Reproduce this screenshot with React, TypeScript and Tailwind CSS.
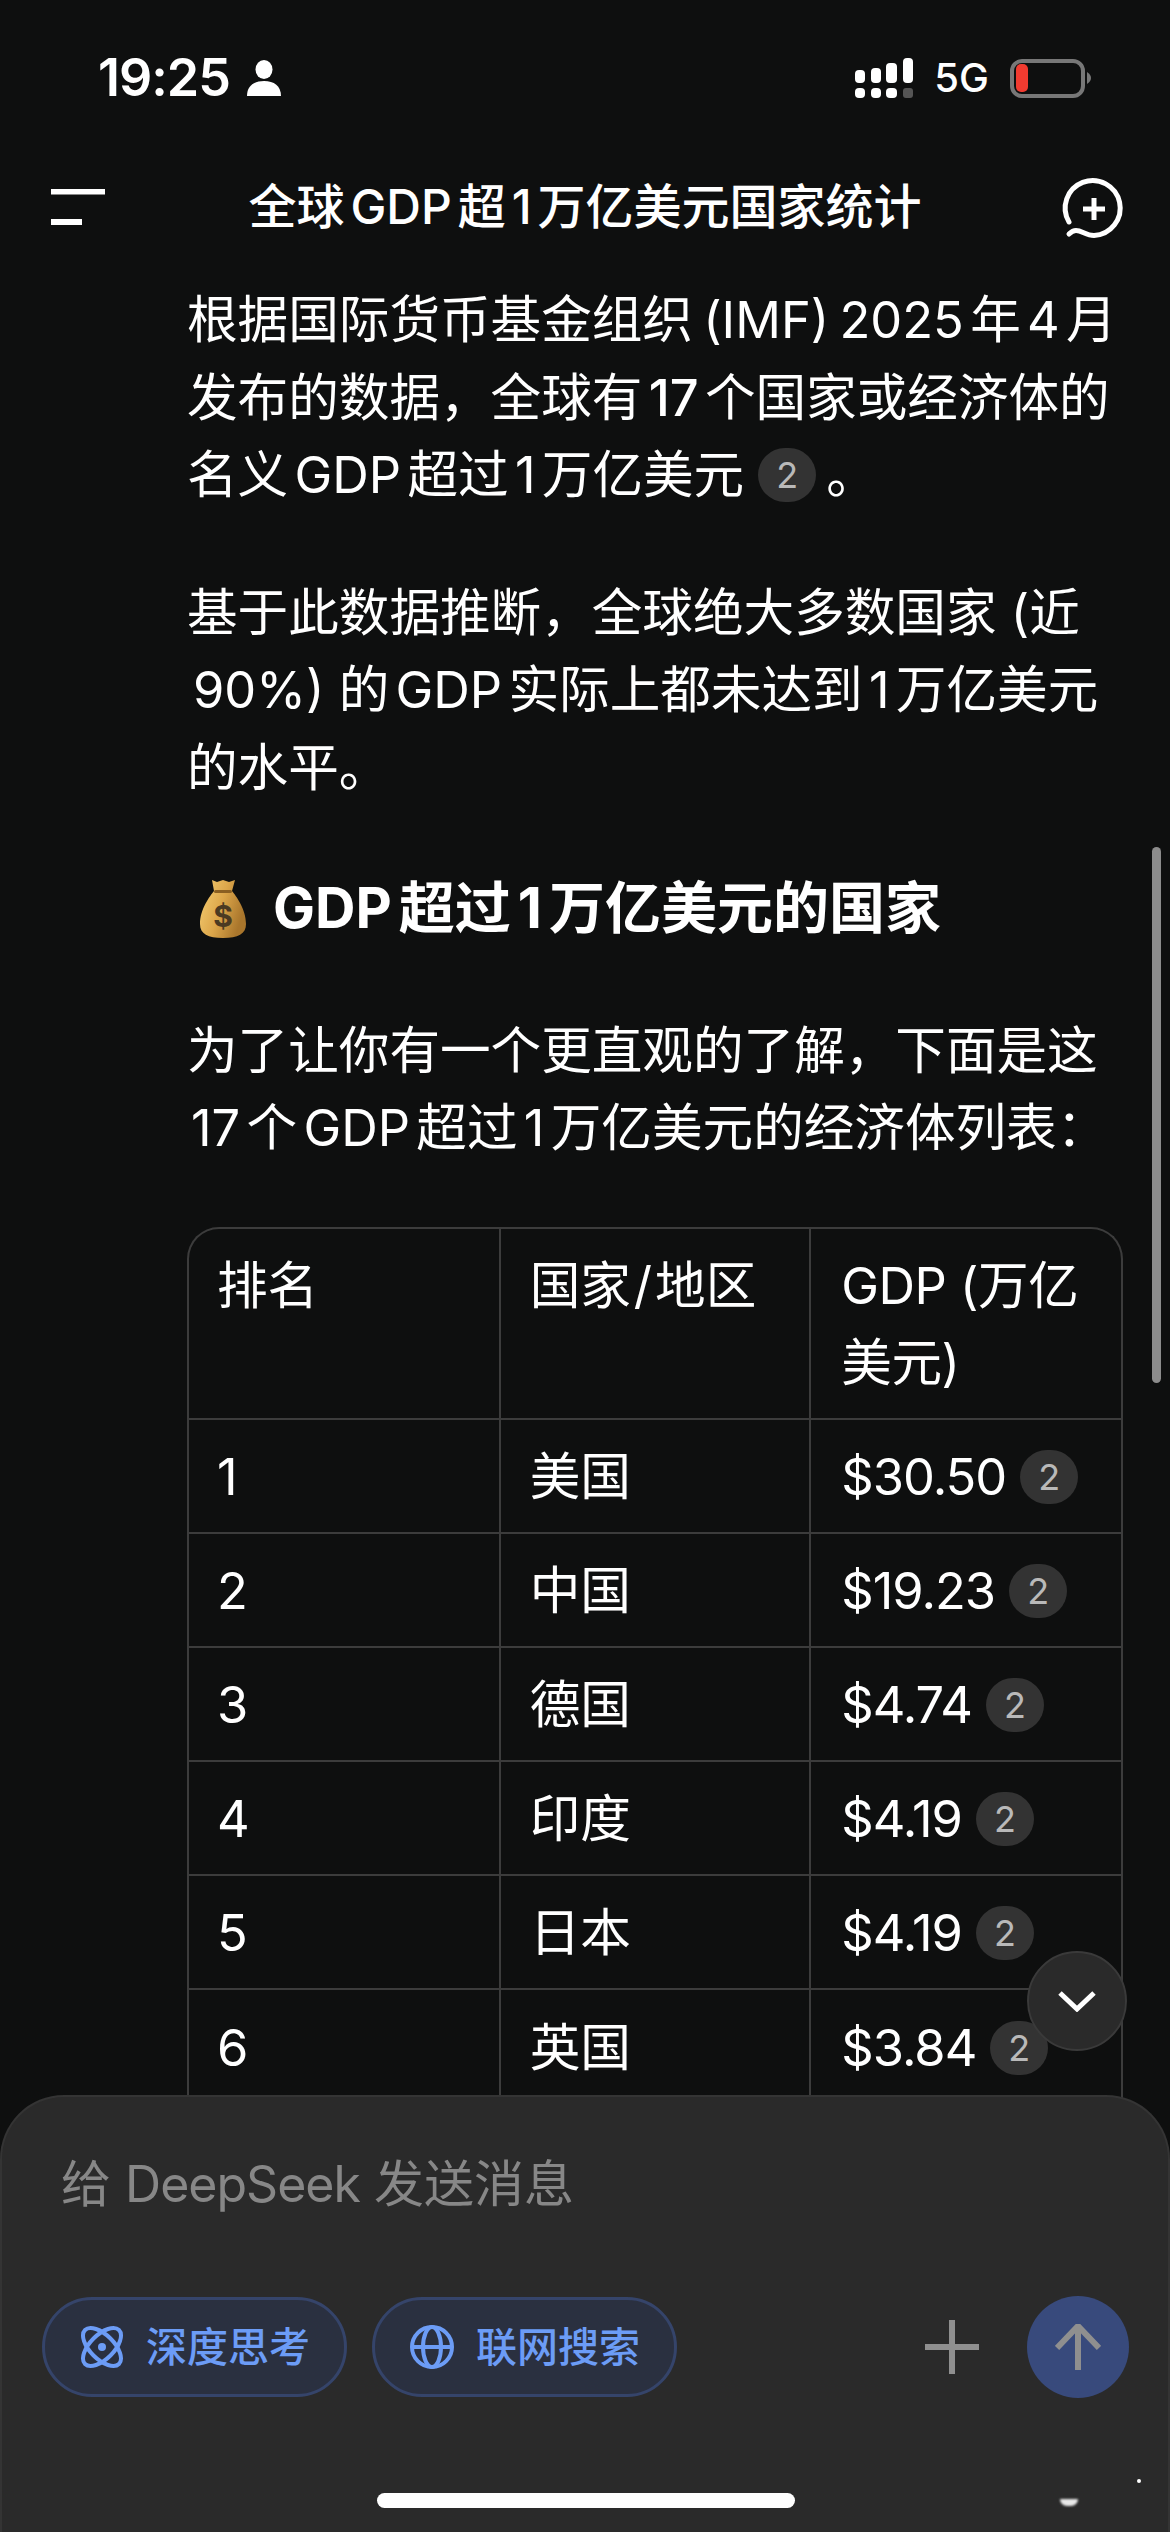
const font = {fontFamily: 'Inter, "Noto Sans CJK SC", sans-serif'};

const rows = [
  ['1', '美国', '$30.50'],
  ['2', '中国', '$19.23'],
  ['3', '德国', '$4.74'],
  ['4', '印度', '$4.19'],
  ['5', '日本', '$4.19'],
  ['6', '英国', '$3.84'],
];

function Cite() {
  return (
    <span className="ml-[14px] inline-flex h-[54px] w-[58px] items-center justify-center rounded-full bg-[#333333] align-[5px] text-[36px] leading-none tracking-normal text-[#b9b9b9]">
      2
    </span>
  );
}

function StatusBar() {
  return (
    <div className="flex h-[156px] items-center justify-between pl-[98px] pr-[79px]">
      <div className="flex items-center gap-[17px]">
        <span className="text-[52px] font-semibold leading-none tracking-[-1px] text-white">19:25</span>
        <svg width="34" height="36" viewBox="0 0 34 36" fill="white">
          <ellipse cx="17" cy="9.5" rx="8.5" ry="9.5" />
          <path d="M0 36c0-10 7-15 17-15s17 5 17 15z" />
        </svg>
      </div>
      <div className="flex items-center">
        <svg width="58" height="40" viewBox="0 0 58 40" fill="white">
          <rect x="0" y="12" width="10" height="13" rx="4" />
          <rect x="16" y="10" width="10" height="15" rx="4" />
          <rect x="31" y="5" width="11" height="20" rx="4" />
          <rect x="48" y="0" width="10" height="25" rx="4" />
          <rect x="0" y="30" width="10" height="10" rx="4" />
          <rect x="16" y="30" width="10" height="10" rx="4" />
          <rect x="31" y="30" width="11" height="10" rx="4" />
          <rect x="48" y="30" width="10" height="10" rx="3" fill="#555555" />
        </svg>
        <span className="ml-[21px] text-[40px] font-medium leading-none text-white">5G</span>
        <div className="ml-[21px] flex h-[39px] w-[75px] items-center rounded-[12px] border-[4px] border-[#777777] pl-[2px]">
          <div className="h-[28px] w-[12px] rounded-[5px] bg-[#f23b30]" />
        </div>
        <svg className="ml-[2px]" width="4" height="12" viewBox="0 0 4 12" fill="#777777">
          <path d="M0 0c3 2 4 4 4 6s-1 4-4 6z" />
        </svg>
      </div>
    </div>
  );
}

function Header() {
  return (
    <div className="grid h-[102px] grid-cols-[1fr_auto_1fr] items-center px-[28px]">
      <svg className="ml-[23px]" width="54" height="36" viewBox="0 0 54 36" fill="white">
        <rect x="0" y="0" width="54" height="5.5" />
        <rect x="0" y="30" width="31" height="6" />
      </svg>
      <h1 className="text-[48px] font-medium leading-none text-white [text-autospace:normal]">全球GDP超1万亿美元国家统计</h1>
      <svg className="justify-self-end" width="100" height="80" viewBox="0 0 100 80" fill="none" stroke="white" strokeWidth="5" strokeLinecap="round">
        <path d="M27 55A27.5 27.5 0 1 1 52 68.5C44 68.5 40 63.5 34 63.5C31 63.5 29 65 27 67" />
        <path d="M41 42H63M52 31V53" strokeLinecap="butt" />
      </svg>
    </div>
  );
}

function MoneyBag() {
  return (
    <svg width="46" height="60" viewBox="0 0 46 60">
      <defs>
        <linearGradient id="bag" x1="0" y1="0" x2="1" y2="0.4">
          <stop offset="0" stopColor="#f6cf74" />
          <stop offset="0.55" stopColor="#dca64a" />
          <stop offset="1" stopColor="#a9762c" />
        </linearGradient>
      </defs>
      <path d="M12 1l5 2 6-2 6 2 6-2-3 11c4 5 14 18 14 33 0 10-8 14-23 14S0 55 0 45c0-15 10-28 14-33z" fill="url(#bag)" />
      <rect x="14" y="11" width="18" height="3" rx="1.5" fill="#8a5f22" />
      <text x="23" y="48" textAnchor="middle" fontSize="30" fontWeight="700" fill="#4b3a22">$</text>
    </svg>
  );
}

function Content() {
  return (
    <main className="pl-[187px] pr-[47px] pt-[23px] text-[50.6px] leading-[77.5px] text-white [text-autospace:normal]">
      <p className="whitespace-nowrap">
        <span className="[word-spacing:-4px]">根据国际货币基金组织 (IMF) 2025</span>年4月<br />
        发布的数据，全球有<span className="font-medium">17</span>个国家或经济体的<br />
        名义GDP超过1万亿美元
        <Cite />
        <span className="ml-[10px]">。</span>
      </p>
      <p className="mt-[60px] whitespace-nowrap">
        基于此数据推断，全球绝大多数国家 (近<br />
        <span className="ml-[6px]">90%) 的GDP实际上都未达到1万亿美元</span><br />
        的水平。
      </p>
      <h2 className="mt-[64px] flex items-center gap-[27px] whitespace-nowrap pl-[13px] text-[56px] font-bold">
        <MoneyBag />
        <span>GDP超过1万亿美元的国家</span>
      </h2>
      <p className="mt-[64px] whitespace-nowrap">
        为了让你有一个更直观的了解，下面是这<br />
        <span className="ml-[4px]">17个GDP超过1万亿美元的经济体列表：</span>
      </p>
      <div className="mt-[60px] overflow-hidden rounded-t-[32px] border-x-2 border-t-2 border-[#3c3c3c]">
        <table className="w-full table-fixed border-collapse">
          <thead>
            <tr>
              <th className="pb-[16px] pl-[28px] pr-[20px] pt-[18px] text-left align-top font-normal">排名</th>
              <th className="border-x-2 border-[#3c3c3c] pb-[16px] pl-[29px] pr-[20px] pt-[18px] text-left align-top font-normal">
                国家<span className="mx-[3px]">/</span>地区
              </th>
              <th className="pb-[16px] pl-[30px] pr-[24px] pt-[18px] text-left align-top font-normal tracking-[-0.5px]">GDP (万亿美元)</th>
            </tr>
          </thead>
          <tbody>
            {rows.map(([rank, name, gdp]) => (
              <tr key={rank} className="h-[114px] border-t-2 border-[#3c3c3c]">
                <td className="pl-[28px] pt-[3px]">{rank}</td>
                <td className="border-x-2 border-[#3c3c3c] pl-[29px] pt-[3px]">{name}</td>
                <td className="whitespace-nowrap pl-[30px] pt-[3px] tracking-[-1px]">
                  {gdp}
                  <Cite />
                </td>
              </tr>
            ))}
          </tbody>
        </table>
      </div>
    </main>
  );
}

function Composer() {
  return (
    <div className="absolute bottom-0 left-0 right-0 h-[437px] rounded-t-[64px] border-x-2 border-t-2 border-[#343434] bg-[#2a2a2a] pl-[40px] pr-[39px] pt-[48px]">
      <p className="pl-[19px] text-[50px] leading-[78px] text-[#878787]">
        给 <span className="tracking-[-1px]">DeepSeek</span> 发送消息
      </p>
      <div className="mt-[73px] flex items-center">
        <button className="flex h-[100px] w-[305px] items-center gap-[22px] rounded-full border-[3px] border-[#35446a] bg-[#2a3040] pl-[35px] text-[41px] font-medium leading-none text-[#6c9cf6]">
          <svg width="44" height="44" viewBox="0 0 44 44" fill="none" stroke="#6c9cf6" strokeWidth="4">
            <ellipse cx="22" cy="22" rx="24" ry="12" transform="rotate(45 22 22)" />
            <ellipse cx="22" cy="22" rx="24" ry="12" transform="rotate(-45 22 22)" />
            <circle cx="22" cy="22" r="4" fill="#6c9cf6" stroke="none" />
          </svg>
          深度思考
        </button>
        <button className="ml-[25px] flex h-[100px] w-[305px] items-center gap-[22px] rounded-full border-[3px] border-[#35446a] bg-[#2a3040] pl-[35px] text-[41px] font-medium leading-none text-[#6c9cf6]">
          <svg width="44" height="44" viewBox="0 0 44 44" fill="none" stroke="#6c9cf6" strokeWidth="4">
            <circle cx="22" cy="22" r="20" />
            <ellipse cx="22" cy="22" rx="9" ry="20" />
            <path d="M2 22H42" />
          </svg>
          联网搜索
        </button>
        <svg className="ml-auto" width="54" height="54" viewBox="0 0 54 54" fill="#8f8f8f">
          <rect x="0" y="24" width="54" height="6" />
          <rect x="24" y="0" width="6" height="54" />
        </svg>
        <div className="ml-[48px] flex h-[102px] w-[102px] items-center justify-center rounded-full bg-[#384a7c]">
          <svg width="46" height="46" viewBox="0 0 46 46" fill="none" stroke="#8f8f8f" strokeWidth="6">
            <path d="M23 46V2M2 24L23 2L44 24" />
          </svg>
        </div>
      </div>
      <div className="absolute left-[375px] top-[396px] h-[15px] w-[418px] rounded-full bg-white" />
      {/* leftovers of the scrubbed watermark */}
      <div className="absolute left-[1058px] top-[402px] h-[7px] w-[18px] rounded-b-full bg-[#e8e8e8] blur-[1px]" />
      <div className="absolute left-[1135px] top-[382px] h-[4px] w-[4px] rounded-full bg-white" />
    </div>
  );
}

export default function App() {
  return (
    <div style={font} className="relative h-[2532px] w-[1170px] overflow-hidden bg-[#0e0f0f]">
      <StatusBar />
      <Header />
      <Content />
      <div className="absolute left-[1152px] top-[847px] h-[536px] w-[9px] rounded-full bg-[#8c8c8c]" />
      <button className="absolute left-[1027px] top-[1951px] flex h-[100px] w-[100px] items-center justify-center rounded-full border-2 border-[#3a3a3a] bg-[#2a2a2a]">
        <svg width="38" height="22" viewBox="0 0 38 22" fill="none" stroke="white" strokeWidth="5">
          <path d="M2 3L19 19L36 3" />
        </svg>
      </button>
      <Composer />
    </div>
  );
}
